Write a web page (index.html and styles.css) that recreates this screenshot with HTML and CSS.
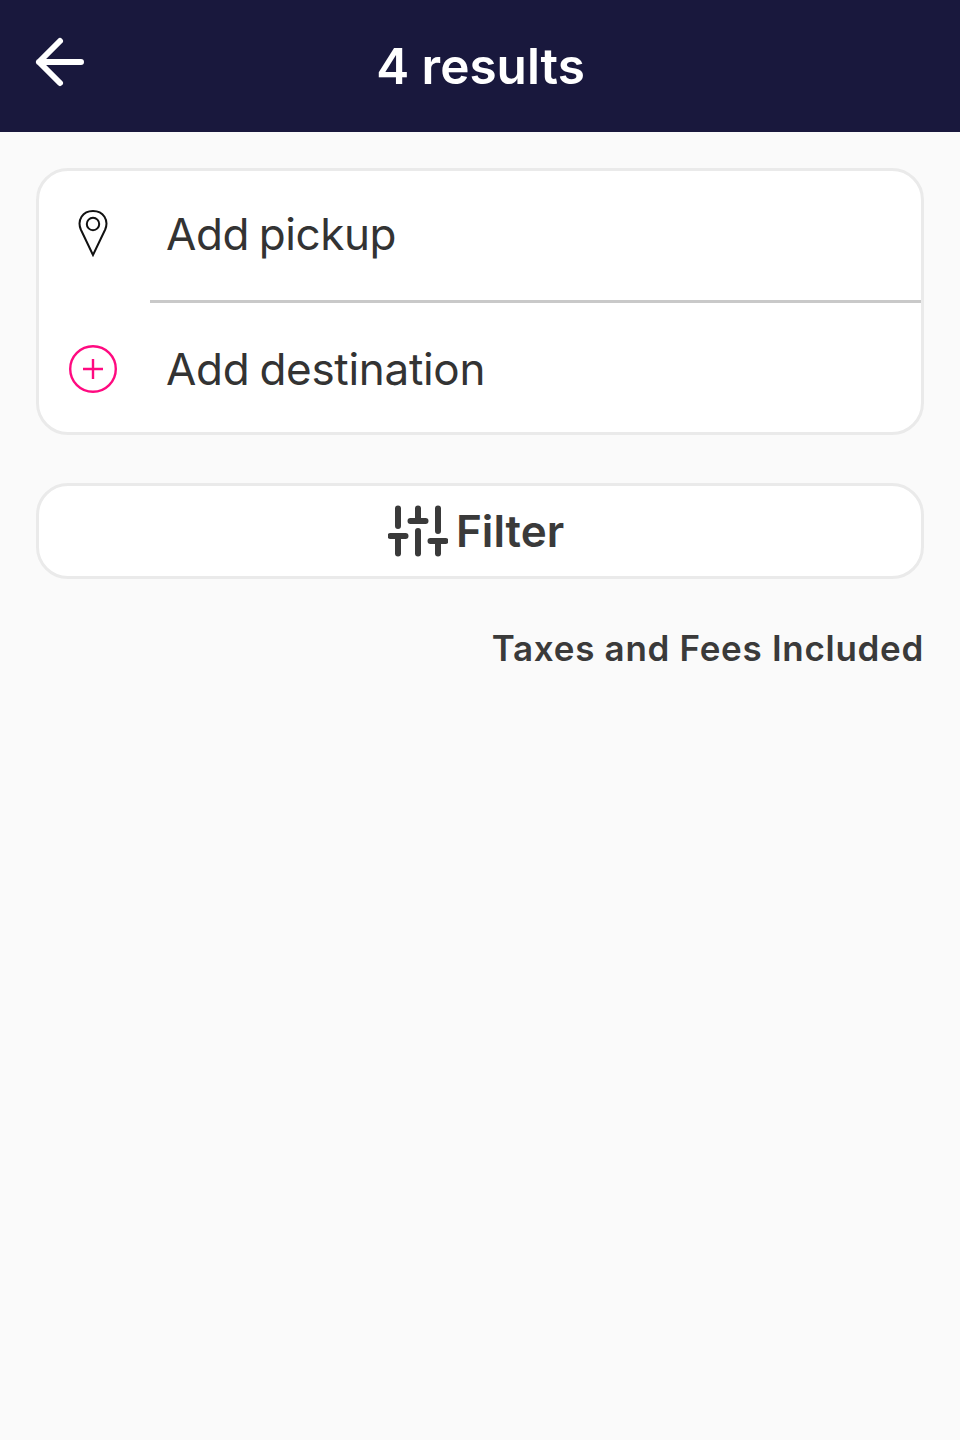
FILE: index.html
```html
<!DOCTYPE html>
<html lang="en">
<head>
<meta charset="utf-8">
<title>Results</title>
<link rel="stylesheet" href="styles.css">
</head>
<body>
<header class="header">
  <svg class="back" viewBox="0 0 24 24"><path d="M19 12H5M12 19l-7-7 7-7"/></svg>
  <h1 class="title">4 results</h1>
</header>
<main class="content">
  <section class="card">
    <div class="row pickup">
      <svg class="row-icon pin" viewBox="0 0 48 48"><path d="M24 46L11.800 20.500C8 11.500 13.500 1.900 24 1.900S40 11.500 36.200 20.500Z"/><circle cx="24" cy="15" r="6.200"/></svg>
      <span class="label">Add pickup</span>
    </div>
    <div class="divider"></div>
    <div class="row destination">
      <svg class="row-icon plus" viewBox="0 0 48 48"><circle cx="24" cy="24" r="22.8"/><path d="M14 24h20M24 14v20"/></svg>
      <span class="label">Add destination</span>
    </div>
  </section>
  <div class="filter">
    <svg class="sliders" viewBox="0 0 24 24"><path d="M4 21v-7M4 10V3M12 21v-9M12 8V3M20 21v-5M20 12V3M1 14h6M9 8h6M17 16h6"/></svg>
    <span class="filter-label">Filter</span>
  </div>
  <p class="note">Taxes and Fees Included</p>
</main>
</body>
</html>
```

FILE: styles.css
```css
* { box-sizing: border-box; }
body {
  margin: 0;
  min-height: 1440px;
  background: #fafafa;
  color: #333;
  font-family: Inter, "Liberation Sans", sans-serif;
}
svg { display: block; flex: none; fill: none; stroke: currentColor; }
.header {
  display: grid;
  grid-template-columns: 72px 1fr 72px;
  height: 132px;
  padding: 0 24px;
  background: #19183d;
  color: #fff;
}
.back {
  width: 72px;
  height: 72px;
  margin-top: 26px;
  stroke-width: 2;
  stroke-linecap: round;
  stroke-linejoin: round;
}
.title {
  margin: 36px 0 0 1px;
  font-size: 49.5px;
  line-height: 60px;
  font-weight: 590;
  text-align: center;
  white-space: nowrap;
}
.content { padding: 36px; }
.card {
  height: 267px;
  border: 3px solid #eaeaea;
  border-radius: 32px;
  background: #fff;
}
.row {
  display: flex;
  align-items: flex-start;
  height: 129px;
  padding-left: 30px;
}
.row-icon { width: 48px; height: 48px; margin-right: 49px; }
.pickup { padding-top: 36px; }
.destination { padding-top: 39px; }
.pin { color: #111; stroke-width: 2; margin-top: 2px; }
.plus { color: #ff0a80; stroke-width: 2.4; margin-top: 3px; }
.label {
  font-size: 44px;
  line-height: 54px;
  letter-spacing: -.3px;
  word-spacing: -2px;
  white-space: nowrap;
}
.pickup .label { letter-spacing: -.45px; }
.divider { height: 3px; margin-left: 111px; background: #c9c9c9; }
.filter {
  display: flex;
  align-items: center;
  height: 96px;
  margin-top: 48px;
  padding-left: 349px;
  border: 3px solid #eaeaea;
  border-radius: 32px;
  background: #fff;
  color: #3a3a3a;
}
.sliders {
  width: 60px;
  height: 60px;
  margin-right: 8px;
  stroke-width: 2.4;
  stroke-linecap: round;
}
.filter-label { font-size: 44px; line-height: 54px; font-weight: 600; }
.note {
  margin: 47px 0 0;
  color: #3a3a3a;
  font-size: 35px;
  line-height: 44px;
  font-weight: 590;
  letter-spacing: .7px;
  text-align: right;
  white-space: nowrap;
}
```
